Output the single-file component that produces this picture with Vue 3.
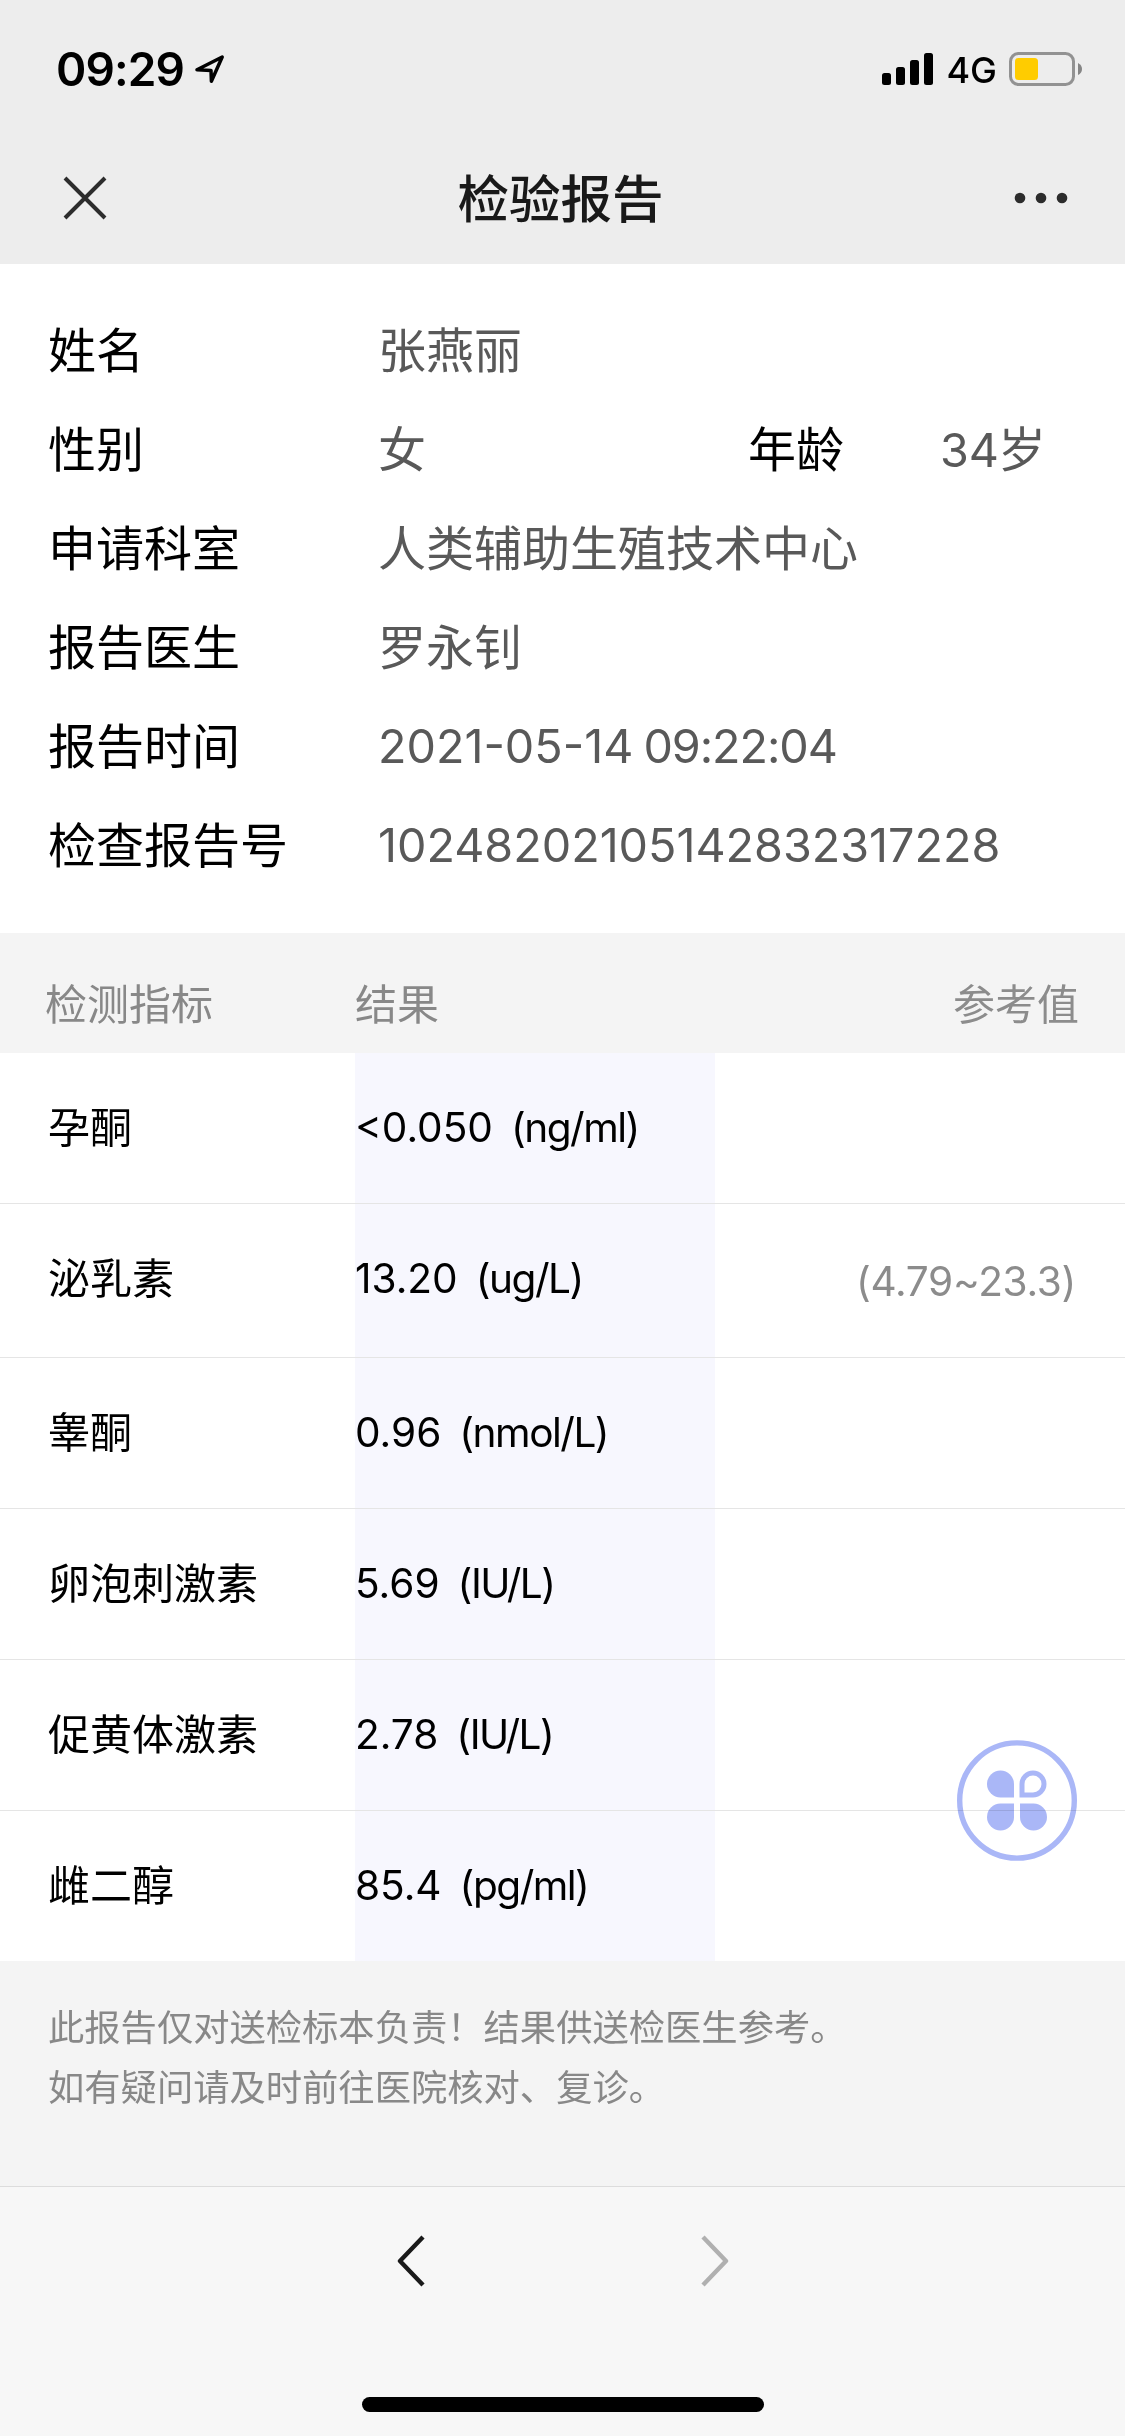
<script setup>
const info = [
  { label: '姓名', value: '张燕丽' },
  { label: '性别', value: '女', label2: '年龄', age: '34' },
  { label: '申请科室', value: '人类辅助生殖技术中心' },
  { label: '报告医生', value: '罗永钊' },
  { label: '报告时间', value: '2021-05-14', time: '09:22:04', numeric: true },
  { label: '检查报告号', value: '10248202105142832317228', numeric: true }
]
const rows = [
  { name: '孕酮', value: '<0.050', unit: '(ng/ml)', range: '' },
  { name: '泌乳素', value: '13.20', unit: '(ug/L)', range: '(4.79~23.3)' },
  { name: '睾酮', value: '0.96', unit: '(nmol/L)', range: '' },
  { name: '卵泡刺激素', value: '5.69', unit: '(IU/L)', range: '' },
  { name: '促黄体激素', value: '2.78', unit: '(IU/L)', range: '' },
  { name: '雌二醇', value: '85.4', unit: '(pg/ml)', range: '' }
]
</script>

<template>
  <div class="screen">
    <header class="top">
      <div class="status">
        <span class="time">09:29</span>
        <svg class="loc" width="32" height="34" viewBox="0 0 32 34">
          <path d="M3 17.8 L28.2 5 L17.4 29.2 L17 18.4 Z" fill="none" stroke="#000" stroke-width="3.5" stroke-linejoin="round" />
        </svg>
        <div class="right">
          <svg width="51" height="34" viewBox="0 0 51 34">
            <rect x="0" y="21" width="9" height="12" rx="2.5" />
            <rect x="14" y="15" width="9" height="18" rx="2.5" />
            <rect x="28" y="8" width="9" height="25" rx="2.5" />
            <rect x="42" y="1" width="9" height="32" rx="2.5" />
          </svg>
          <span class="net">4G</span>
          <svg width="74" height="34" viewBox="0 0 74 34">
            <rect x="1.5" y="1.5" width="63" height="31" rx="8" fill="none" stroke="#929292" stroke-width="3" />
            <rect x="6" y="6" width="23" height="22" rx="3.5" fill="#ffcc00" />
            <path d="M69 11 Q73 13 73 17 Q73 21 69 23 Z" fill="#858585" />
          </svg>
        </div>
      </div>
      <nav class="nav">
        <svg width="44" height="44" viewBox="0 0 44 44">
          <path d="M2 2 L42 42 M42 2 L2 42" stroke="#2c2c2c" stroke-width="4" />
        </svg>
        <h1>检验报告</h1>
        <svg width="54" height="12" viewBox="0 0 54 12" fill="#2c2c2c">
          <circle cx="6" cy="6" r="5.3" /><circle cx="27" cy="6" r="5.3" /><circle cx="48" cy="6" r="5.3" />
        </svg>
      </nav>
    </header>

    <section class="info">
      <div v-for="r in info" :key="r.label" class="line">
        <span class="label">{{ r.label }}</span>
        <span class="val first" :class="{ digits: r.numeric }">{{ r.value }}<span v-if="r.time" class="clock">{{ ' ' + r.time }}</span></span>
        <template v-if="r.label2">
          <span class="label2">{{ r.label2 }}</span>
          <span class="val age"><span class="digits">{{ r.age }}</span>岁</span>
        </template>
      </div>
    </section>

    <div class="thead">
      <span class="c1">检测指标</span><span class="c2">结果</span><span class="c3">参考值</span>
    </div>
    <div class="tbody">
      <div v-for="r in rows" :key="r.name" class="row" :class="{ tall: r.range }">
        <span class="c1">{{ r.name }}</span>
        <span class="c2">{{ r.value }}<span class="unit">{{ r.unit }}</span></span>
        <span class="c3">{{ r.range }}</span>
      </div>
    </div>

    <section class="note">
      <p>此报告仅对送检标本负责！结果供送检医生参考。</p>
      <p>如有疑问请及时前往医院核对、复诊。</p>
    </section>

    <footer class="bottom">
      <div class="arrows">
        <svg width="28" height="52" viewBox="0 0 28 52"><path d="M26 2 L3 26 L26 50" fill="none" stroke="#1a1a1a" stroke-width="4.4" stroke-linejoin="round" /></svg>
        <svg width="28" height="52" viewBox="0 0 28 52"><path d="M2 2 L25 26 L2 50" fill="none" stroke="#b0b0b0" stroke-width="4.4" stroke-linejoin="round" /></svg>
      </div>
      <div class="home"></div>
    </footer>

    <div class="fab">
      <svg width="120" height="122" viewBox="0 0 120 122" fill="#aab7f7">
        <ellipse cx="60" cy="60.5" rx="57.3" ry="57.6" fill="none" stroke="#aab7f7" stroke-width="5.4" />
        <path d="M57 57.5 H43.5 A13.5 13.5 0 1 1 57 44 Z" />
        <path d="M65 55 V44 A11 11 0 1 1 76 55 Z" fill="none" stroke="#aab7f7" stroke-width="5" />
        <path d="M57 63.5 V77 A13.5 13.5 0 1 1 43.5 63.5 Z" />
        <path d="M63 63.5 H76.5 A13.5 13.5 0 1 1 63 77 Z" />
      </svg>
    </div>
  </div>
</template>

<style>
body { margin: 0; background: #f7f7f7; }
</style>

<style scoped>
.screen {
  position: relative;
  width: 1125px;
  height: 2436px;
  display: flex;
  flex-direction: column;
  overflow: hidden;
  background: #fff;
  color: #000;
  font-family: Inter, "Noto Sans CJK SC", sans-serif;
}
.top { height: 264px; background: #ededed; }
.status { display: flex; align-items: center; height: 138px; padding: 0 42px 0 56px; box-sizing: border-box; }
.time { font-size: 46px; font-weight: 600; letter-spacing: -0.9px; line-height: 56px; }
.loc { margin-left: 10px; }
.right { display: flex; align-items: center; margin-left: auto; }
.net { margin: 0 12px 0 13px; padding-top: 1px; font-size: 36px; font-weight: 500; line-height: 40px; }
.nav { display: flex; align-items: center; justify-content: space-between; height: 119px; padding: 0 57px 0 63px; }
.nav h1 { margin: 0; padding-top: 3px; font-size: 51.5px; font-weight: 500; color: #191919; line-height: 60px; }
.info { height: 669px; padding: 36.5px 0 0 48px; box-sizing: border-box; font-size: 48px; line-height: 99px; }
.line { display: flex; height: 99px; }
.label { width: 330px; }
.val { color: #595959; white-space: nowrap; }
.first { width: 370px; }
.digits { font-size: 46.7px; }
.clock { white-space: pre; letter-spacing: -1.05px; word-spacing: -2px; }
.label2 { width: 192px; }
.age .digits { margin-right: -1px; }
.thead { display: flex; height: 120px; background: #f4f4f4; color: #888; font-size: 42px; line-height: 144px; }
.c1 { width: 355px; padding-left: 48px; box-sizing: border-box; }
.c2 { width: 360px; }
.c3 { flex: 1; padding-right: 50px; text-align: right; color: #8c8c8c; }
.thead .c1 { padding-left: 45px; }
.thead .c3 { padding-right: 46px; }
.row { display: flex; height: 151px; box-sizing: border-box; border-bottom: 1px solid #e5e5e5; font-size: 42px; line-height: 150px;
  background: linear-gradient(#f7f7fe, #f7f7fe) 355px 0 / 360px 100% no-repeat; }
.row.tall { height: 154px; }
.row:last-child { height: 150px; border-bottom: 0; }
.row .c2 { font-size: 40.6px; line-height: 149px; }
.row .c3 { padding-right: 49px; font-size: 40.6px; line-height: 155px; letter-spacing: -0.3px; }
.unit { margin-left: 18px; letter-spacing: -1.5px; }
.note { height: 225px; padding: 37px 48px 0; box-sizing: border-box; background: #f4f4f4; color: #888; }
.note p { margin: 0; font-size: 36.3px; line-height: 60px; }
.bottom { flex: 1; display: flex; flex-direction: column; align-items: center; border-top: 1px solid #dcdcdc; background: #f7f7f7; }
.arrows { display: flex; gap: 276px; margin-top: 48px; }
.home { width: 402px; height: 15px; margin-top: 110px; border-radius: 8px; background: #000; }
.fab { position: absolute; left: 957px; top: 1740px; mix-blend-mode: multiply; }
</style>
